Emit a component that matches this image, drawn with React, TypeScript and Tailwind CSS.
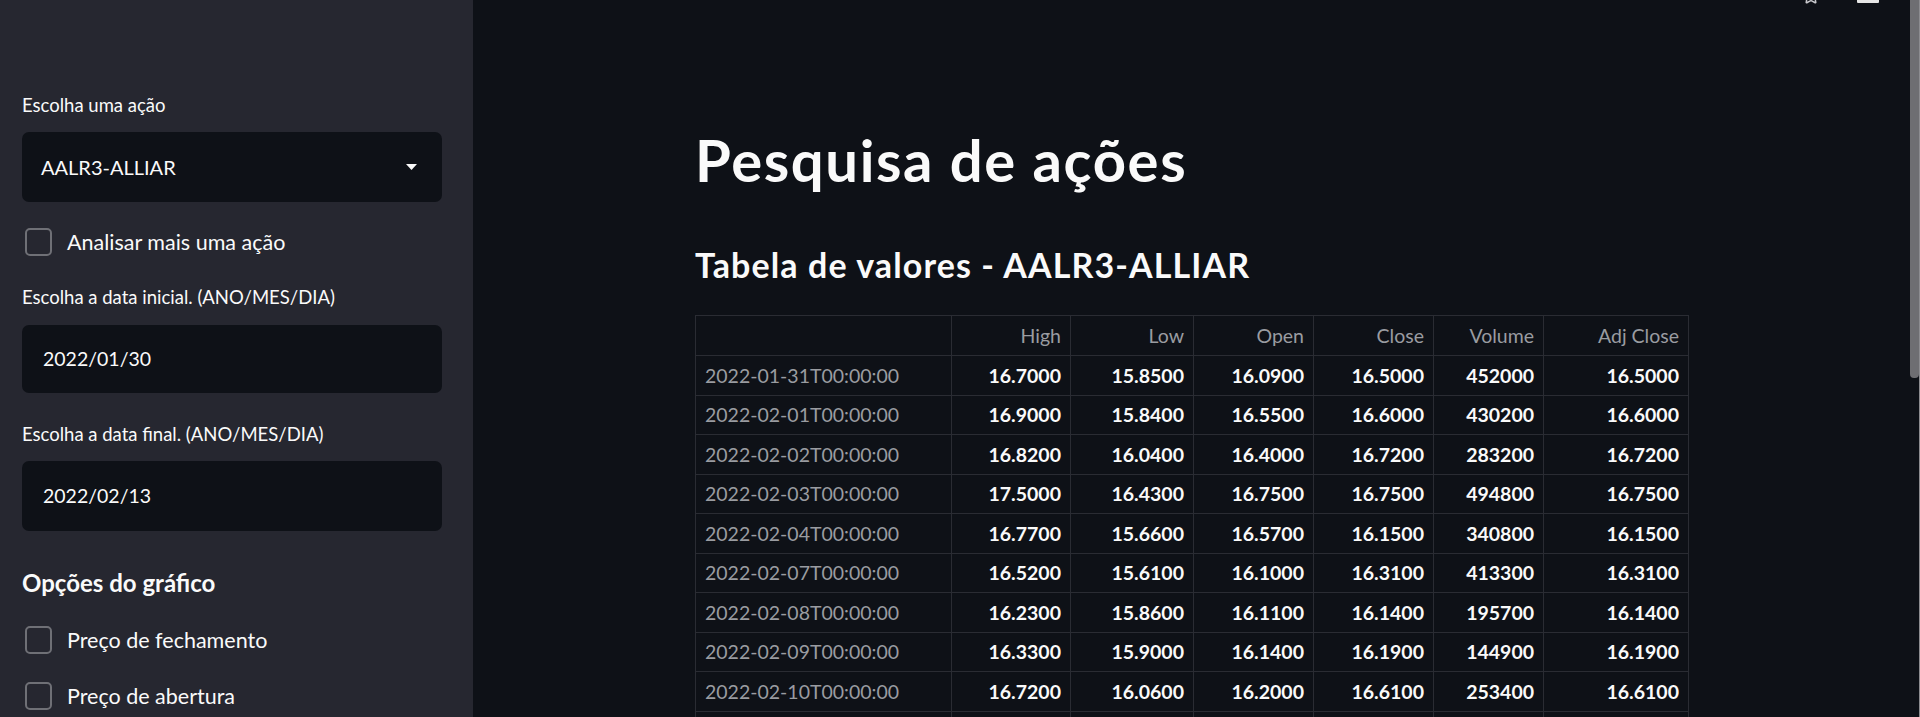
import React from "react";
import { Star, X } from "lucide-react";

type Row = { date: string; high: string; low: string; open: string; close: string; volume: string; adj: string };

const rows: Row[] = [
  { date: "2022-01-31T00:00:00", high: "16.7000", low: "15.8500", open: "16.0900", close: "16.5000", volume: "452000", adj: "16.5000" },
  { date: "2022-02-01T00:00:00", high: "16.9000", low: "15.8400", open: "16.5500", close: "16.6000", volume: "430200", adj: "16.6000" },
  { date: "2022-02-02T00:00:00", high: "16.8200", low: "16.0400", open: "16.4000", close: "16.7200", volume: "283200", adj: "16.7200" },
  { date: "2022-02-03T00:00:00", high: "17.5000", low: "16.4300", open: "16.7500", close: "16.7500", volume: "494800", adj: "16.7500" },
  { date: "2022-02-04T00:00:00", high: "16.7700", low: "15.6600", open: "16.5700", close: "16.1500", volume: "340800", adj: "16.1500" },
  { date: "2022-02-07T00:00:00", high: "16.5200", low: "15.6100", open: "16.1000", close: "16.3100", volume: "413300", adj: "16.3100" },
  { date: "2022-02-08T00:00:00", high: "16.2300", low: "15.8600", open: "16.1100", close: "16.1400", volume: "195700", adj: "16.1400" },
  { date: "2022-02-09T00:00:00", high: "16.3300", low: "15.9000", open: "16.1400", close: "16.1900", volume: "144900", adj: "16.1900" },
  { date: "2022-02-10T00:00:00", high: "16.7200", low: "16.0600", open: "16.2000", close: "16.6100", volume: "253400", adj: "16.6100" },
  { date: "2022-02-11T00:00:00", high: "16.6500", low: "16.1000", open: "16.5000", close: "16.3000", volume: "210500", adj: "16.3000" },
];

const cols = [
  { key: "high", label: "High", w: "w-[119px]" },
  { key: "low", label: "Low", w: "w-[123px]" },
  { key: "open", label: "Open", w: "w-[120px]" },
  { key: "close", label: "Close", w: "w-[120px]" },
  { key: "volume", label: "Volume", w: "w-[110px]" },
  { key: "adj", label: "Adj Close", w: "w-[144px]" },
] as const;

function Checkbox({ label }: { label: string }) {
  return (
    <div className="flex items-center h-[28px] pl-[3px]">
      <div className="w-[27px] h-[28px] rounded-[5px] border-2 border-[#6f7076] shrink-0" />
      <span className="ml-[15px] text-[21.5px] text-[#fafafa]">{label}</span>
    </div>
  );
}

function Label({ children }: { children: React.ReactNode }) {
  return <div className="h-[28px] flex items-center text-[18.5px] text-[#fafafa]">{children}</div>;
}

function InputBox({ value, h, select }: { value: string; h: string; select?: boolean }) {
  return (
    <div className={`${h} w-[420px] rounded-[7px] bg-[#0e1117] flex items-center justify-between ${select ? "pl-[19px]" : "pl-[21px]"} pr-[25px]`}>
      <span className={`${select ? "text-[20px]" : "text-[19.5px]"} text-[#fafafa]`}>{value}</span>
      {select && (
        <svg width="11" height="6" viewBox="0 0 11 6">
          <path d="M0 0h11L5.5 6z" fill="#fafafa" />
        </svg>
      )}
    </div>
  );
}

export default function App() {
  return (
    <div className="h-[717px] w-[1920px] overflow-hidden flex font-['Lato',sans-serif] bg-[#0e1117]">
      {/* sidebar */}
      <div className="w-[473px] shrink-0 bg-[#262730] flex flex-col px-[22px]">
        <div className="h-0 flex justify-end pr-[9px]">
          <X size={20} strokeWidth={2} className="-mt-[18px] text-[#9a9ba0]" />
        </div>
        <div className="pt-[92px]">
          <Label>Escolha uma ação</Label>
        </div>
        <div className="mt-[12px]">
          <InputBox value="AALR3-ALLIAR" h="h-[70px]" select />
        </div>
        <div className="mt-[26px]">
          <Checkbox label="Analisar mais uma ação" />
        </div>
        <div className="mt-[28px]">
          <Label>Escolha a data inicial. (ANO/MES/DIA)</Label>
        </div>
        <div className="mt-[13px]">
          <InputBox value="2022/01/30" h="h-[68px]" />
        </div>
        <div className="mt-[28px]">
          <Label>Escolha a data final. (ANO/MES/DIA)</Label>
        </div>
        <div className="mt-[12px]">
          <InputBox value="2022/02/13" h="h-[70px]" />
        </div>
        <div className="mt-[36px] h-[32px] flex items-center text-[24px] font-bold text-[#fafafa]">Opções do gráfico</div>
        <div className="mt-[27px]">
          <Checkbox label="Preço de fechamento" />
        </div>
        <div className="mt-[28px]">
          <Checkbox label="Preço de abertura" />
        </div>
      </div>

      {/* main */}
      <div className="flex-1 flex flex-col pl-[222px]">
        <div className="h-0 flex justify-end pr-[31px] gap-[37px]">
          <Star size={18} strokeWidth={2} className="-mt-[13px] text-[#c8c8cc]" />
          <div className="w-[22px] h-[3px] bg-[#e6e6e6] rounded-b-[1px]" />
        </div>
        <div className="pt-[124px] h-[196px] text-[58px] leading-[72px] tracking-[1.6px] font-bold text-[#fafafa]">Pesquisa de ações</div>
        <div className="mt-[48px] h-[40px] flex items-center text-[34px] tracking-[1.1px] font-bold text-[#fafafa]">
          Tabela de valores - AALR3-ALLIAR
        </div>
        <div className="mt-[31px] w-[994px] border border-[#2a2c33] text-[19.5px]">
          <div className="flex h-[40px] border-b border-[#2a2c33] text-[#9a9ca1]">
            <div className="w-[256px] border-r border-[#2a2c33]" />
            {cols.map((c, i) => (
              <div
                key={c.key}
                className={`${c.w} flex items-center justify-end pr-[9px] ${i < cols.length - 1 ? "border-r border-[#2a2c33]" : ""}`}
              >
                {c.label}
              </div>
            ))}
          </div>
          {rows.map((r) => (
            <div key={r.date} className="flex h-[39.5px] border-b border-[#2a2c33]">
              <div className="w-[256px] border-r border-[#2a2c33] flex items-center pl-[9px] text-[#9a9ca1]">{r.date}</div>
              {cols.map((c, i) => (
                <div
                  key={c.key}
                  className={`${c.w} flex items-center justify-end pr-[9px] font-bold text-[#fafafa] ${i < cols.length - 1 ? "border-r border-[#2a2c33]" : ""}`}
                >
                  {r[c.key]}
                </div>
              ))}
            </div>
          ))}
        </div>
      </div>

      {/* scrollbar */}
      <div className="w-[10px] shrink-0 flex">
        <div className="w-[9px] h-[378px] bg-[#6e6e72] rounded-b-[4px]" />
        <div className="w-[1px] bg-[#8c8c90]" />
      </div>
    </div>
  );
}
